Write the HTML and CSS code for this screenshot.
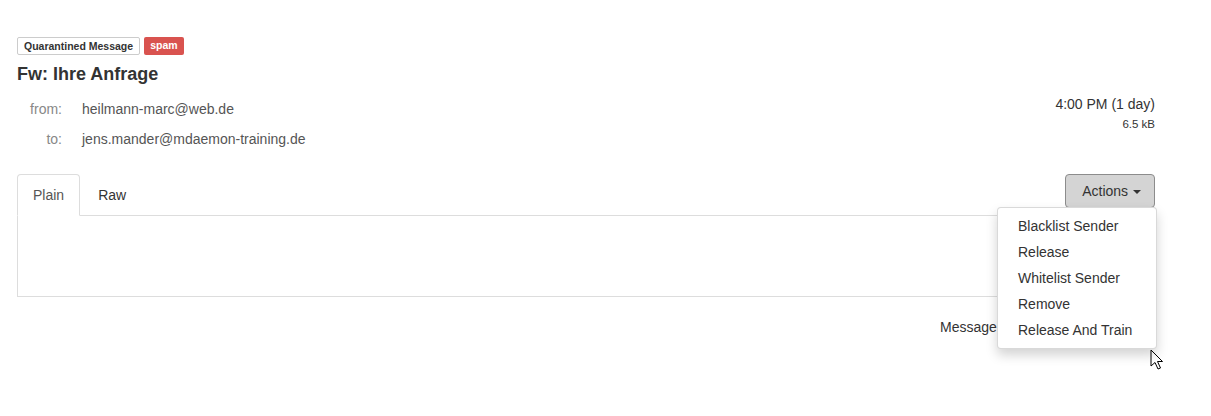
FILE: index.html
```html
<!DOCTYPE html>
<html lang="en">
<head>
    <meta charset="UTF-8">
    <meta name="viewport" content="width=device-width, initial-scale=1.0">
    <title>Quarantined Message</title>
    <link rel="stylesheet" href="styles.css">
</head>
<body>
    <div class="page">
        <div class="labels">
            <span class="label label-default">Quarantined Message</span>
            <span class="label label-danger">spam</span>
        </div>
        <h1 class="subject">Fw: Ihre Anfrage</h1>

        <div class="meta">
            <table class="addresses">
                <tr>
                    <td class="addr-label">from:</td>
                    <td class="addr-value">heilmann-marc@web.de</td>
                </tr>
                <tr>
                    <td class="addr-label">to:</td>
                    <td class="addr-value">jens.mander@mdaemon-training.de</td>
                </tr>
            </table>
            <div class="info">
                <div class="date">4:00 PM (1 day)</div>
                <div class="size">6.5 kB</div>
            </div>
        </div>

        <div class="tabs-bar">
            <ul class="nav-tabs">
                <li class="active"><a href="#">Plain</a></li>
                <li><a href="#">Raw</a></li>
            </ul>
            <div class="dropdown">
                <button class="btn">Actions <span class="caret"></span></button>
                <ul class="dropdown-menu">
                    <li><a href="#">Blacklist Sender</a></li>
                    <li><a href="#">Release</a></li>
                    <li><a href="#">Whitelist Sender</a></li>
                    <li><a href="#">Remove</a></li>
                    <li><a href="#">Release And Train</a></li>
                </ul>
            </div>
        </div>
        <div class="tab-content"></div>

        <div class="footer">Message 1 of 1</div>

        <!-- mouse pointer -->
        <svg class="cursor" width="14" height="22" viewBox="0 0 14 22">
            <path d="M1 1 L1 17 L5 13.5 L8 20 L10.5 19 L7.5 12.5 L12.5 12.5 Z" fill="#fff" stroke="#000" stroke-width="1" stroke-linejoin="round"/>
        </svg>
    </div>
</body>
</html>
```

FILE: styles.css
```css
body {
    font-family: "Liberation Sans", Arial, sans-serif;
    font-size: 14px;
    line-height: 20px;
    color: #333;
    margin: 0;
    background-color: #fff;
}
.page {
    position: relative;
    width: 1157px;
    min-height: 416px;
    box-sizing: border-box;
    padding: 37px 0 0 17px;
}
.labels {
    display: flex;
    gap: 4px;
}
.label {
    display: inline-block;
    height: 18px;
    box-sizing: border-box;
    padding: 0 6px;
    font-size: 10.5px;
    font-weight: bold;
    line-height: 17px;
    border-radius: 2px;
}
.label-default {
    border: 1px solid #ccc;
    background-color: #fff;
    color: #333;
}
.label-danger {
    background-color: #d9534f;
    color: #fff;
}
.subject {
    font-size: 18px;
    line-height: 20px;
    margin: 9px 0 0;
}
.meta {
    display: flex;
    justify-content: space-between;
    margin-top: 10px;
}
.addresses {
    border-collapse: collapse;
}
.addresses td {
    height: 30px;
    padding: 0;
    vertical-align: middle;
}
.addr-label {
    width: 45px;
    text-align: right;
    color: #888;
    padding-right: 20px !important;
}
.addr-value {
    color: #555;
}
.info {
    text-align: right;
    padding-right: 2px;
}
.date {
    color: #333;
}
.size {
    font-size: 11.5px;
    line-height: 16px;
    margin-top: 2px;
    padding-right: 0;
}
.tabs-bar {
    display: flex;
    justify-content: space-between;
    align-items: flex-start;
    margin-top: 20px;
    border-bottom: 1px solid #ddd;
    height: 41px;
}
.nav-tabs {
    list-style: none;
    margin: 0;
    padding: 0;
    display: flex;
}
.nav-tabs a {
    display: block;
    padding: 10px 18px 10px 17px;
    border: 1px solid transparent;
    border-radius: 4px 4px 0 0;
    color: #333;
    text-decoration: none;
}
.nav-tabs .active a {
    border-color: #ddd #ddd transparent;
    background-color: #fff;
    color: #555;
    padding: 10px 15px;
}
.dropdown {
    position: relative;
    margin-right: 2px;
}
.btn {
    font-family: inherit;
    font-size: 14px;
    line-height: 20px;
    color: #333;
    background-color: #d4d4d4;
    border: 1px solid #8c8c8c;
    border-radius: 4px;
    padding: 6px 13px 6px 16px;
    height: 34px;
}
.caret {
    display: inline-block;
    width: 0;
    height: 0;
    margin-left: 1px;
    vertical-align: middle;
    border-top: 4px solid #333;
    border-left: 4px solid transparent;
    border-right: 4px solid transparent;
}
.dropdown-menu {
    position: absolute;
    top: 33px;
    right: -2px;
    z-index: 10;
    min-width: 160px;
    box-sizing: border-box;
    list-style: none;
    margin: 0;
    padding: 5px 0;
    background-color: #fff;
    border: 1px solid rgba(0, 0, 0, 0.15);
    border-radius: 4px;
    box-shadow: 0 6px 12px rgba(0, 0, 0, 0.175);
}
.dropdown-menu a {
    display: block;
    padding: 3px 20px;
    color: #333;
    text-decoration: none;
    white-space: nowrap;
}
.tab-content {
    height: 80px;
    border: 1px solid #ddd;
    border-top: none;
}
.footer {
    margin-top: 20px;
    padding-left: 923px;
}
.cursor {
    position: absolute;
    left: 1150px;
    top: 349px;
}
```
